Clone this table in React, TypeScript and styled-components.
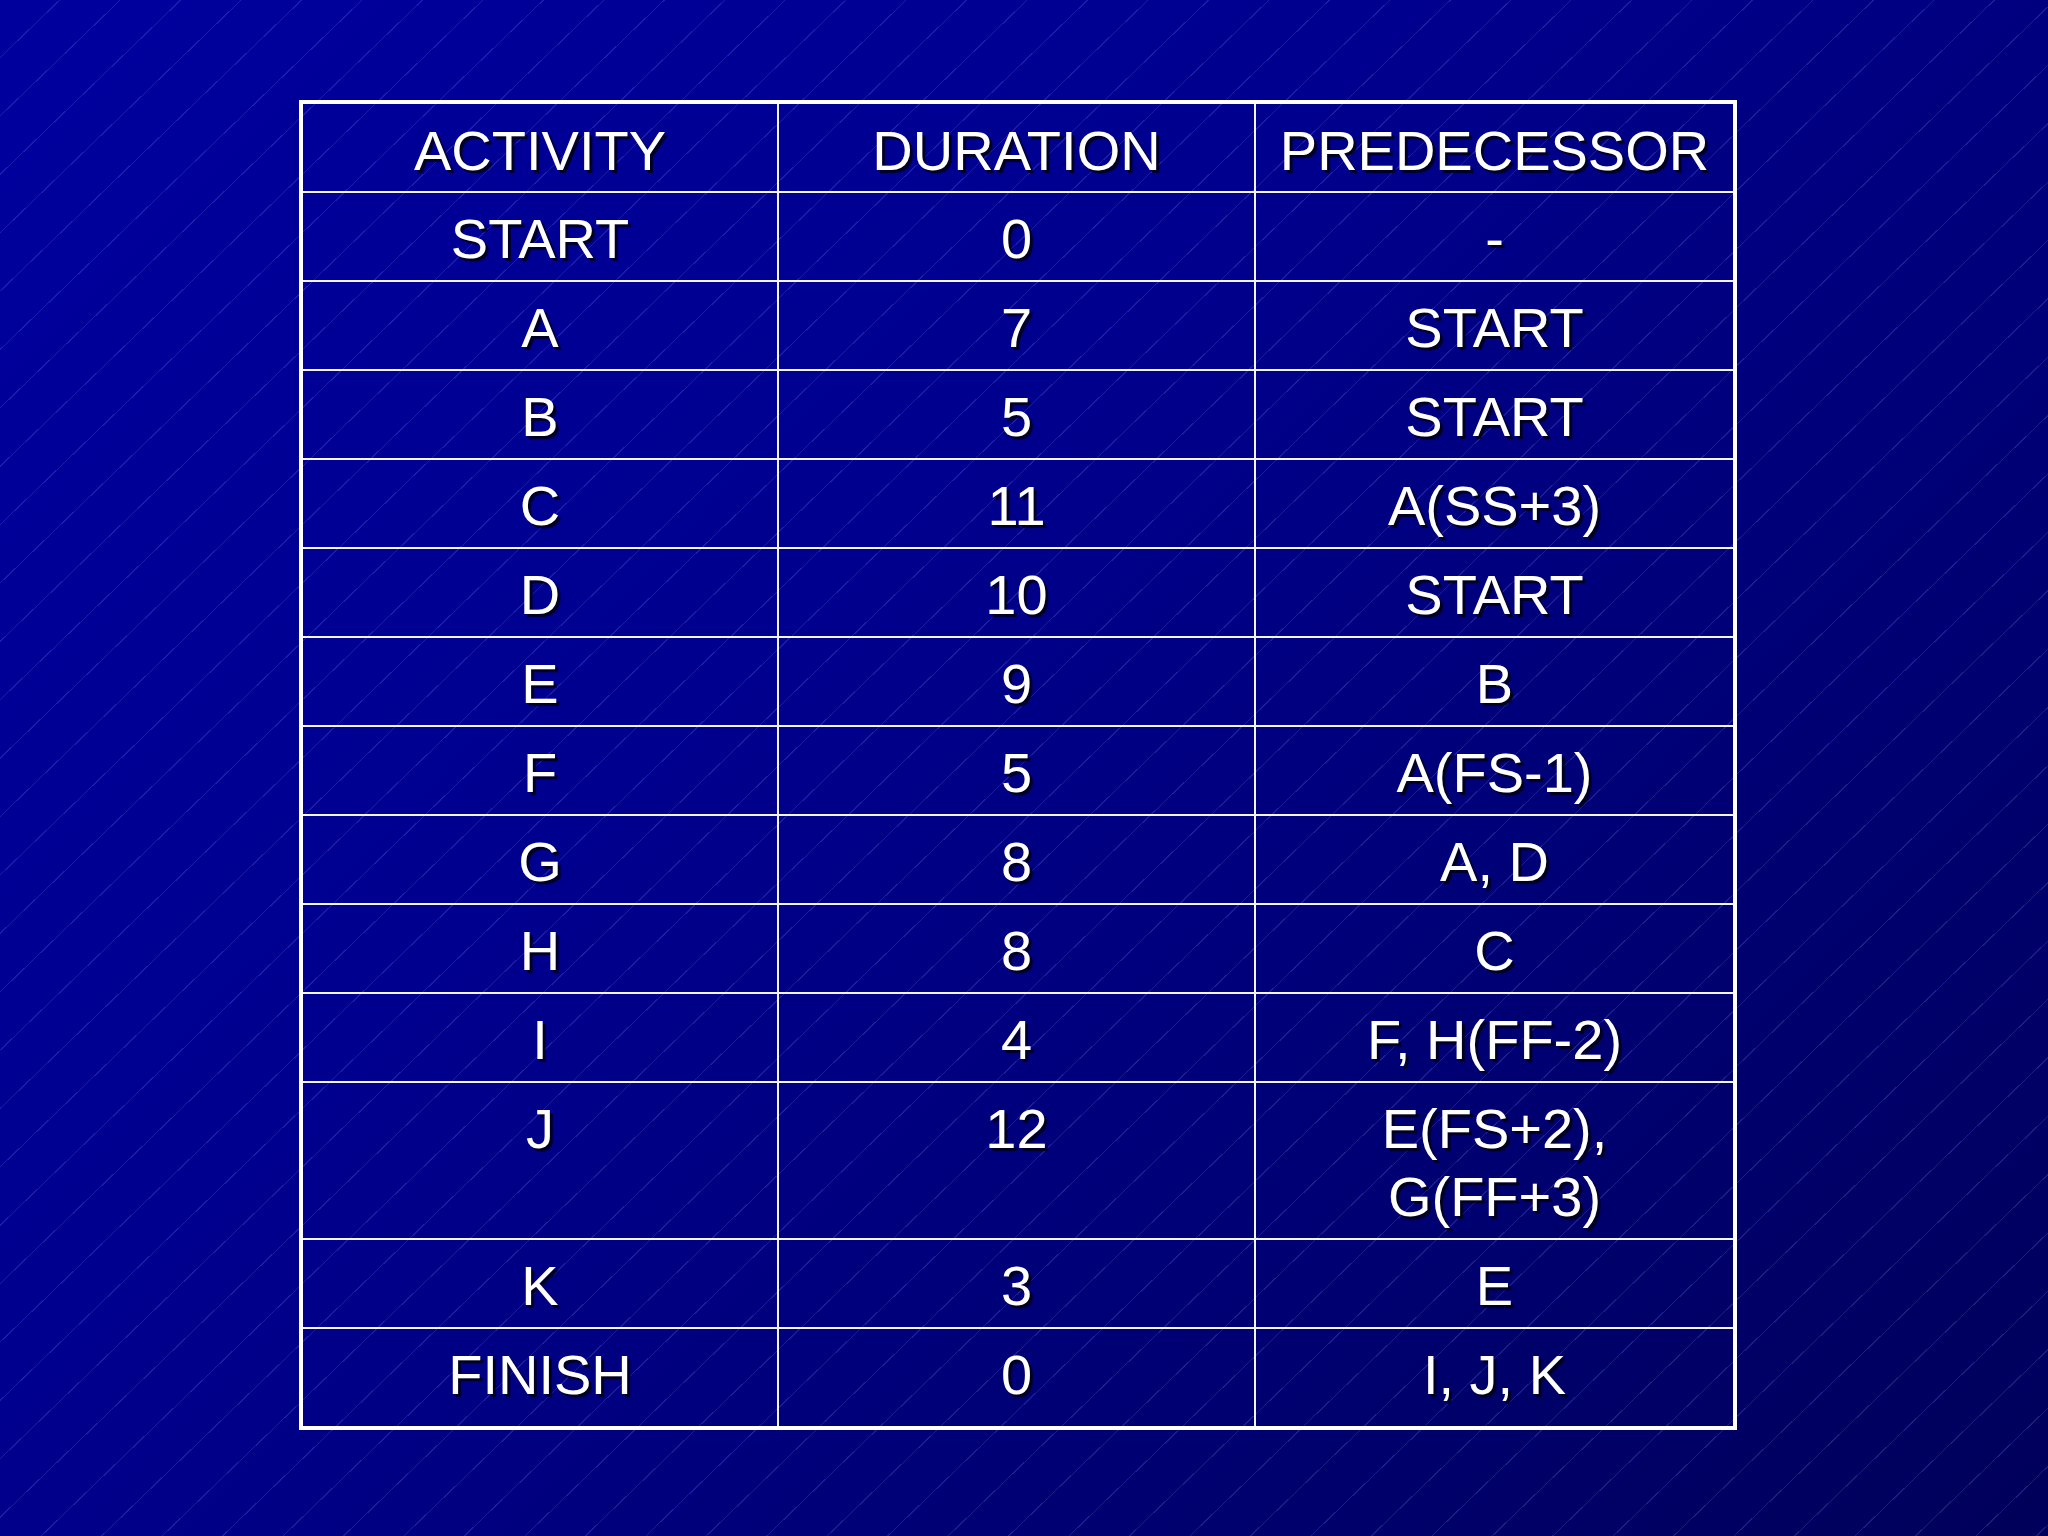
import styled, { createGlobalStyle } from "styled-components";

const GlobalStyle = createGlobalStyle`
  html, body {
    margin: 0;
    padding: 0;
  }
  body {
    font-family: "Liberation Sans", Arial, sans-serif;
  }
`;

type Row = { activity: string; duration: string; predecessor: string[] };

const headers = ["ACTIVITY", "DURATION", "PREDECESSOR"];
const colWidths = [477, 477, 480];

const rows: Row[] = [
  { activity: "START", duration: "0", predecessor: ["-"] },
  { activity: "A", duration: "7", predecessor: ["START"] },
  { activity: "B", duration: "5", predecessor: ["START"] },
  { activity: "C", duration: "11", predecessor: ["A(SS+3)"] },
  { activity: "D", duration: "10", predecessor: ["START"] },
  { activity: "E", duration: "9", predecessor: ["B"] },
  { activity: "F", duration: "5", predecessor: ["A(FS-1)"] },
  { activity: "G", duration: "8", predecessor: ["A, D"] },
  { activity: "H", duration: "8", predecessor: ["C"] },
  { activity: "I", duration: "4", predecessor: ["F, H(FF-2)"] },
  { activity: "J", duration: "12", predecessor: ["E(FS+2),", "G(FF+3)"] },
  { activity: "K", duration: "3", predecessor: ["E"] },
  { activity: "FINISH", duration: "0", predecessor: ["I, J, K"] },
];

// slide background: blue gradient with thin diagonal pin stripes
const Slide = styled.div`
  width: 2048px;
  height: 1536px;
  box-sizing: border-box;
  padding: 100px 0 0 299px;
  background:
    repeating-linear-gradient(
      136deg,
      transparent 0 41px,
      rgba(110, 110, 240, 0.26) 41px 42px
    ),
    linear-gradient(135deg, #00009e 0%, #00008e 40%, #000070 75%, #00005a 100%);
  overflow: hidden;
`;

const Table = styled.table`
  border-collapse: collapse;
  border: 4px solid #ffffff;
  table-layout: fixed;
  width: 1434px;
`;

const Col = styled.col<{ $w: number }>`
  width: ${(p) => p.$w}px;
`;

const HeadCell = styled.th`
  border: 2px solid #f4f4ff;
  padding: 13px 0 6px;
  text-align: center;
  color: #ffffff;
  font-weight: 400;
  font-size: 56px;
  line-height: 68px;
  text-shadow: 3px 3px 1px rgba(0, 0, 20, 0.85);
  white-space: nowrap;
`;

const Cell = styled.td<{ $last?: boolean }>`
  border: 2px solid #f4f4ff;
  padding: ${(p) => (p.$last ? "12px 0 17px" : "12px 0 7px")};
  text-align: center;
  vertical-align: top;
  color: #ffffff;
  font-size: 56px;
  line-height: 68px;
  text-shadow: 3px 3px 1px rgba(0, 0, 20, 0.85);
  white-space: nowrap;
`;

const Line = styled.div``;

export default function App() {
  return (
    <>
      <GlobalStyle />
      <Slide>
        <Table>
          <colgroup>
            {colWidths.map((w, i) => (
              <Col key={i} $w={w} />
            ))}
          </colgroup>
          <thead>
            <tr>
              {headers.map((h) => (
                <HeadCell key={h}>{h}</HeadCell>
              ))}
            </tr>
          </thead>
          <tbody>
            {rows.map((r, i) => {
              const last = i === rows.length - 1;
              return (
                <tr key={r.activity}>
                  <Cell $last={last}>{r.activity}</Cell>
                  <Cell $last={last}>{r.duration}</Cell>
                  <Cell $last={last}>
                    {r.predecessor.map((l) => (
                      <Line key={l}>{l}</Line>
                    ))}
                  </Cell>
                </tr>
              );
            })}
          </tbody>
        </Table>
      </Slide>
    </>
  );
}
